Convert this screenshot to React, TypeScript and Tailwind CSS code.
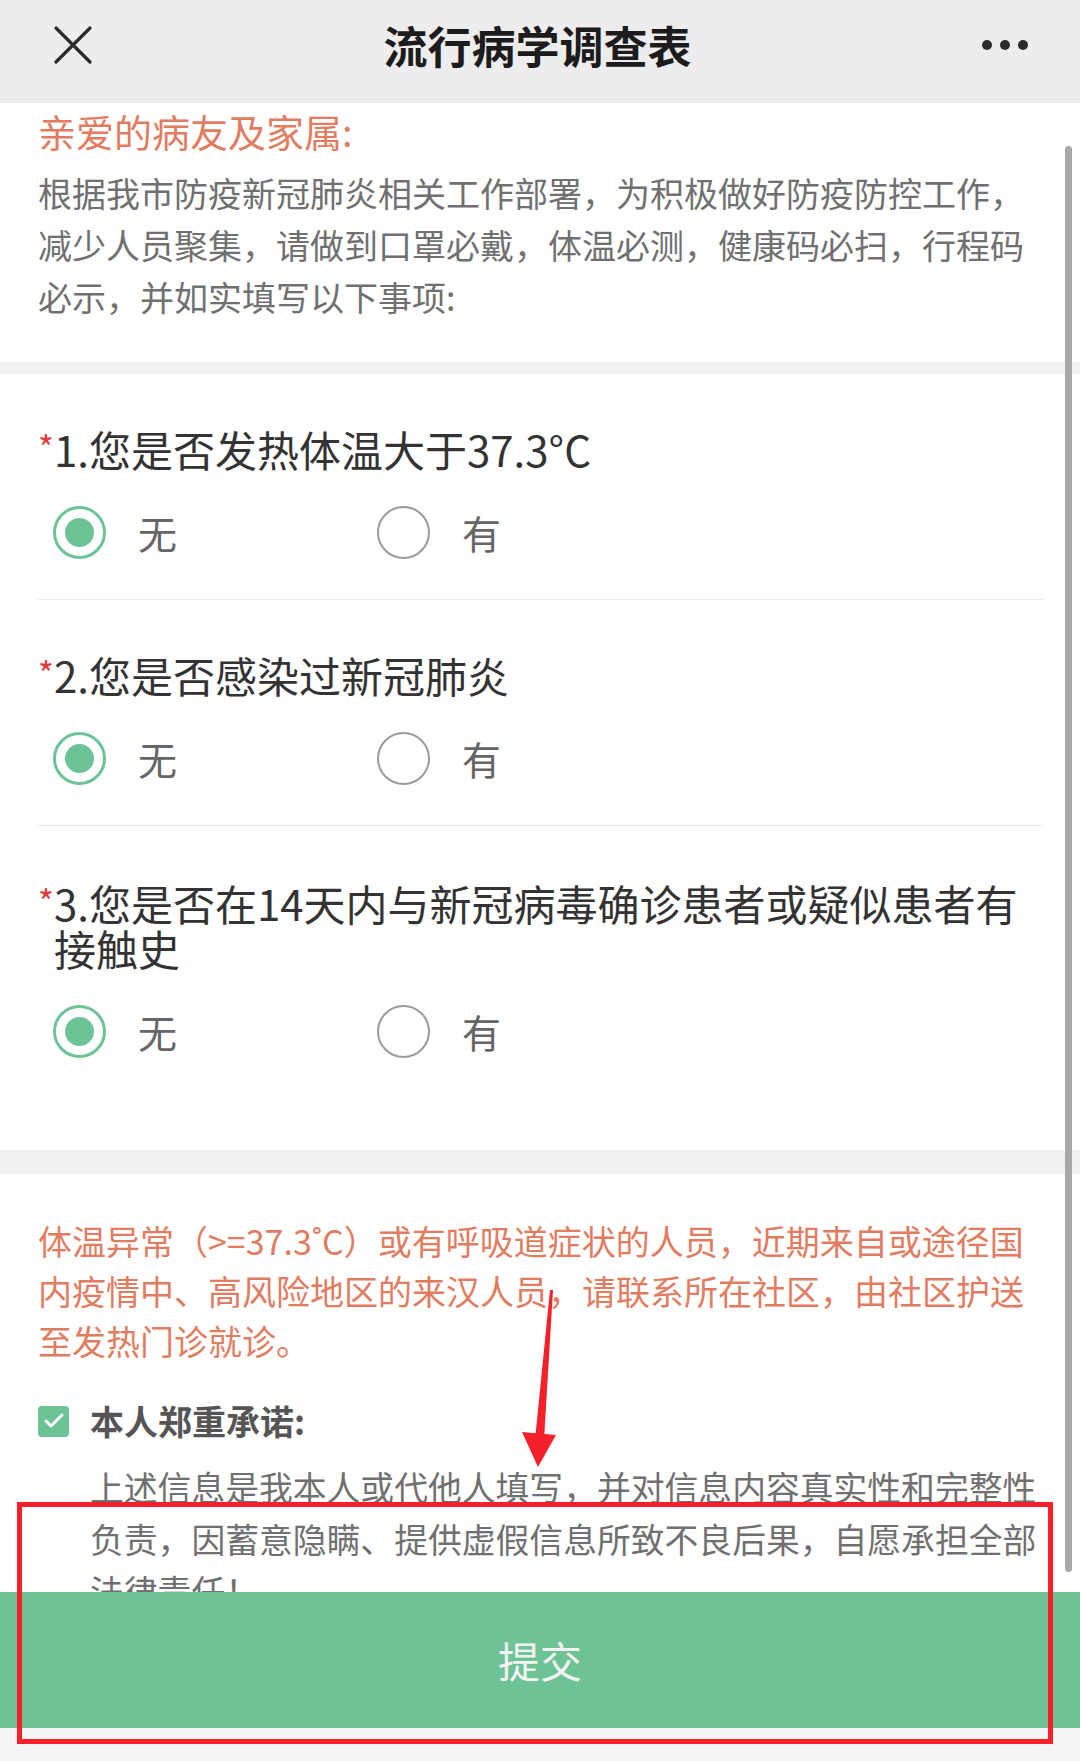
import { Check } from "lucide-react";

const font = { fontFamily: '"Noto Sans CJK SC", "Noto Sans", sans-serif' };

const questions = [
  { no: 1, text: "1.您是否发热体温大于37.3°C" },
  { no: 2, text: "2.您是否感染过新冠肺炎" },
  { no: 3, text: "3.您是否在14天内与新冠病毒确诊患者或疑似患者有接触史" },
];

function Radio({ checked, label }: { checked: boolean; label: string }) {
  return (
    <div className="flex w-[324px] items-center">
      {checked ? (
        <div className="flex h-[53px] w-[53px] items-center justify-center rounded-full border-[3px] border-[#6cc396] bg-white">
          <div className="h-[29px] w-[29px] rounded-full bg-[#6cc396]" />
        </div>
      ) : (
        <div className="h-[53px] w-[53px] rounded-full border-[2px] border-[#9a9a9a] bg-white" />
      )}
      <span className="ml-[32px] text-[39px] leading-[53px] text-[#666]">{label}</span>
    </div>
  );
}

function Question({ text, last }: { text: string; last: boolean }) {
  return (
    <div className={last ? "pt-[54px] pb-[92px]" : "border-b border-[#e8e8e8] pt-[52px] pb-[40px]"}>
      <div className="flex">
        <span className="w-[16px] shrink-0 pt-[6px] text-[34px] leading-[30px] text-[#e5383b]">*</span>
        <p className="flex-1 text-[42px] leading-[45px] text-[#333]">{text}</p>
      </div>
      <div className="mt-[35px] ml-[15px] flex">
        <Radio checked label="无" />
        <Radio checked={false} label="有" />
      </div>
    </div>
  );
}

export default function App() {
  return (
    <div className="relative flex h-[1761px] w-[1080px] flex-col overflow-hidden bg-white" style={font}>
      {/* Header */}
      <header className="flex h-[103px] shrink-0 items-center justify-between bg-[#ededed] px-[52px] pb-[13px]">
        <svg width="40" height="40" viewBox="0 0 40 40" className="ml-[1px]">
          <path d="M3 3 L37 37 M37 3 L3 37" stroke="#2b2b2b" strokeWidth="3.2" strokeLinecap="round" />
        </svg>
        <h1 className="text-[44px] font-semibold leading-[50px] text-[#1c1c1c]">流行病学调查表</h1>
        <div className="flex w-[46px] items-center justify-between">
          <span className="h-[10px] w-[10px] rounded-full bg-[#2b2b2b]" />
          <span className="h-[10px] w-[10px] rounded-full bg-[#2b2b2b]" />
          <span className="h-[10px] w-[10px] rounded-full bg-[#2b2b2b]" />
        </div>
      </header>

      {/* Scrolling content */}
      <main className="relative flex-1 overflow-hidden">
        <section className="pl-[38px] pr-[36px] pt-[4px] pb-[39px]">
          <h2 className="text-[38px] leading-[48px] text-[#e27c61]">亲爱的病友及家属:</h2>
          <p className="mt-[12px] text-[34px] leading-[52px] text-[#707070]">
            根据我市防疫新冠肺炎相关工作部署，为积极做好防疫防控工作，减少人员聚集，请做到口罩必戴，体温必测，健康码必扫，行程码必示，并如实填写以下事项:
          </p>
        </section>

        <div className="h-[12px] bg-[#f1f1f1]" />

        <section className="pl-[38px] pr-[37px]">
          {questions.map((q, i) => (
            <Question key={q.no} text={q.text} last={i === questions.length - 1} />
          ))}
        </section>

        <div className="h-[24px] bg-[#f1f1f1]" />

        <section className="pl-[38px] pr-[36px] pt-[42px]">
          <p className="text-[34px] leading-[50px] text-[#e27c61]">
            体温异常（&gt;=37.3˚C）或有呼吸道症状的人员，近期来自或途径国内疫情中、高风险地区的来汉人员，请联系所在社区，由社区护送至发热门诊就诊。
          </p>
          <div className="mt-[30px] flex items-center">
            <div className="flex h-[31px] w-[31px] items-center justify-center rounded-[4px] bg-[#6cc396]">
              <Check size={24} strokeWidth={3} color="#ffffff" />
            </div>
            <span className="ml-[21px] text-[34px] font-bold leading-[50px] text-[#555]">本人郑重承诺:</span>
          </div>
          <p className="mt-[15px] pl-[52px] text-[33.8px] leading-[52px] text-[#707070]">
            上述信息是我本人或代他人填写，并对信息内容真实性和完整性负责，因蓄意隐瞒、提供虚假信息所致不良后果，自愿承担全部法律责任！
          </p>
        </section>

        {/* scrollbar */}
        <div className="absolute right-[8px] top-[43px] h-[1426px] w-[7px] rounded-full bg-[#a8a8a8]" />
      </main>

      {/* Submit bar */}
      <button className="flex h-[136px] w-full shrink-0 items-center justify-center bg-[#6dc396] text-[42px] leading-[50px] text-[#f4f4f4]">
        提交
      </button>
      <div className="h-[33px] shrink-0 bg-[#f5f5f5]" />

      {/* red annotation marks */}
      <svg className="pointer-events-none absolute inset-0" width="1080" height="1761" viewBox="0 0 1080 1761">
        <polygon points="550,1290 553,1290 544,1440 535,1440" fill="#f5202a" />
        <polygon points="522,1432 556,1435 538,1467" fill="#f5202a" />
        <rect x="19.5" y="1504.5" width="1031" height="237" fill="none" stroke="#f5202a" strokeWidth="5" />
      </svg>
    </div>
  );
}
